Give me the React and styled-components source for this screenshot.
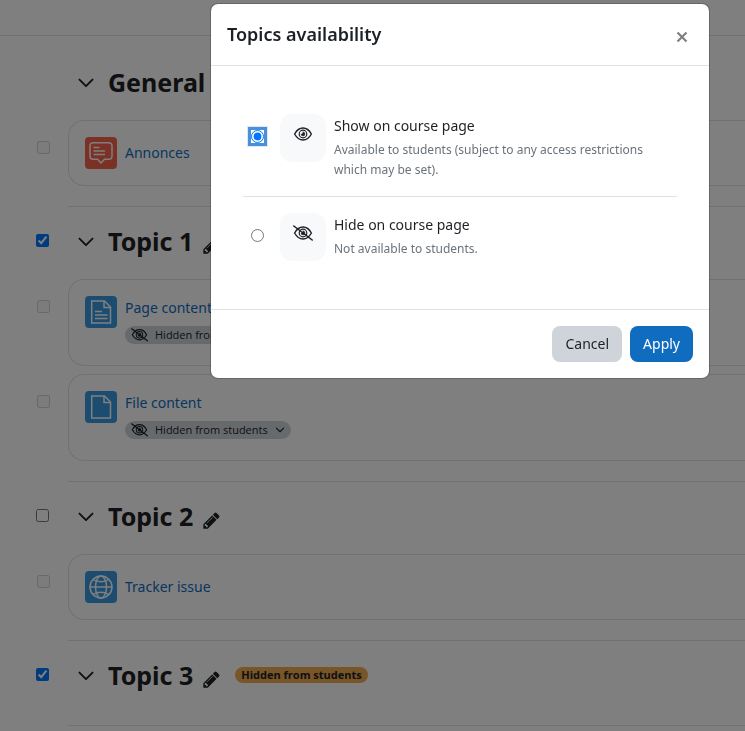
import React, { useState } from 'react';
import styled, { createGlobalStyle } from 'styled-components';

const GlobalStyle = createGlobalStyle`
  * {
    box-sizing: border-box;
  }

  body {
    margin: 0;
    background: #fff;
    color: #1d2125;
    font-family: "Noto Sans", "Open Sans", sans-serif;
    font-size: 14px;
    line-height: 24px;
  }

  button {
    font: inherit;
    color: inherit;
    cursor: pointer;
  }
`

const Page = styled.div`
  min-height: 100vh;
  overflow: hidden;
`

const Navbar = styled.header`
  height: 36px;
  border-bottom: 1px solid #dee2e6;
`

const Course = styled.main`
  padding-top: 12px;
`

const Section = styled.section`
  padding-bottom: 12px;
`

const SectionLine = styled.hr`
  height: 1px;
  margin: 0 0 0 68px;
  border: 0;
  background: #dee2e6;
`

const SectionHeader = styled.div`
  display: flex;
  align-items: center;
  height: 72px;
  padding-bottom: 2px;
`

const SelectCell = styled.div`
  flex: 0 0 68px;
  align-self: flex-start;
  padding: ${props => props.$activity ? "21px 0 0 37px" : "27px 0 0 36px"};
`

const Checkbox = styled.input`
  display: block;
  width: 13px;
  height: 13px;
  margin: 0;
`

const IconButton = styled.button`
  display: flex;
  align-items: center;
  justify-content: center;
  width: ${props => props.$width}px;
  height: 32px;
  padding: ${props => props.$low ? "6px 0 0" : "0"};
  border: 0;
  background: none;
`

const SectionTitle = styled.h3`
  margin: 0 8px 0 4px;
  padding-bottom: 2px;
  font-size: 25px;
  font-weight: 700;
  line-height: 32px;
`

const HiddenBadge = styled.span`
  margin: 0 0 2px 14px;
  padding: 0 6px;
  border-radius: 8px;
  background: #f0ad4e;
  font-family: "Open Sans", sans-serif;
  font-size: 11px;
  font-weight: 700;
  line-height: 16px;
`

const ActivityList = styled.ul`
  margin: 0;
  padding: 0;
  list-style: none;
`

const ActivityRow = styled.li`
  display: flex;
  margin-bottom: 8px;
`

const Card = styled.div`
  flex: 1;
  display: flex;
  align-items: ${props => props.$tall ? "flex-start" : "center"};
  gap: 8px;
  min-height: ${props => props.$tall ? 87 : 66}px;
  padding: 16px;
  border: 1px solid #dee2e6;
  border-right: 0;
  border-radius: 16px 0 0 16px;
`

const ActivityIcon = styled.span`
  display: flex;
  padding: 4px;
  border-radius: 4px;
  background: ${props => props.$color};
`

const ActivityBody = styled.div`
  display: flex;
  flex-direction: column;
  align-items: flex-start;
  gap: 6px;
`

const ActivityLink = styled.a`
  color: #0f6cbf;
  text-decoration: none;
`

const VisibilityButton = styled.button`
  display: flex;
  align-items: center;
  gap: 7px;
  height: 18px;
  padding: 0 6px;
  border: 0;
  border-radius: 9px;
  background: #ced4da;

  && {
    font-family: "Open Sans", sans-serif;
    font-size: 11px;
    line-height: 18px;
  }
`

const Backdrop = styled.div`
  position: fixed;
  inset: 0;
  display: flex;
  align-items: flex-start;
  justify-content: flex-end;
  padding: 3px 35px;
  background: rgba(0, 0, 0, 0.5);
`

const Dialog = styled.form`
  width: 100%;
  max-width: 500px;
  border: 1px solid rgba(0, 0, 0, 0.2);
  border-radius: 8px;
  background: #fff;
  background-clip: padding-box;
`

const DialogHeader = styled.div`
  display: flex;
  align-items: center;
  justify-content: space-between;
  height: 62px;
  padding: 0 16px 2px;
  border-bottom: 1px solid #dee2e6;
`

const DialogTitle = styled.h5`
  margin: 0;
  font-size: 18px;
  font-weight: 600;
  line-height: 24px;
`

const CloseButton = styled(IconButton)`
  color: #808080;
`

const DialogBody = styled.div`
  padding: 32px;
`

const Option = styled.div`
  display: flex;
  align-items: flex-start;
  padding: 16px 0;

  & + & {
    border-top: 1px solid #dee2e6;
  }
`

const Radio = styled.input`
  flex: none;
  width: 13px;
  height: 13px;
  margin: 16px 16px 0 8px;

  &:checked {
    border-radius: 0;
    outline: 3px solid #4a90d6;
    box-shadow: 0 0 0 4px #dbe9f7;
  }
`

const OptionIcon = styled.span`
  flex: none;
  display: flex;
  align-items: center;
  justify-content: center;
  width: 46px;
  height: 48px;
  margin-right: 8px;
  padding-bottom: 8px;
  border-radius: 12px;
  background: #f8f9fa;
`

const OptionLabel = styled.label`
  display: block;
`

const OptionHelp = styled.p`
  margin: 2px 0 0;
  color: #6a737b;
  font-size: 12px;
  line-height: 20px;
`

const DialogFooter = styled.div`
  display: flex;
  justify-content: flex-end;
  gap: 8px;
  padding: 16px;
  border-top: 1px solid #dee2e6;
`

const Button = styled.button`
  height: 36px;
  padding: 0 13px;
  border: 0;
  border-radius: 8px;
  background: ${props => props.$primary ? "#0f6cbf" : "#ced4da"};

  && {
    color: ${props => props.$primary ? "#fff" : "#1d2125"};
  }
`

function Chevron({ size }) {
  return (
    <svg width={size} height={size} viewBox="0 0 16 16" fill="none" stroke="currentColor"
      strokeWidth="1.7" strokeLinecap="round" strokeLinejoin="round" aria-hidden="true">
      <path d="M2.200 5l5.800 5.800 5.800-5.800" />
    </svg>
  )
}

function Pencil() {
  return (
    <svg width="19" height="19" viewBox="0 0 1792 1792" fill="currentColor" aria-hidden="true">
      <path d="M491 1536l91-91-235-235-91 91v107h128v128h107zm523-928q0-22-22-22-10 0-17 7l-542 542q-7 7-7 17 0 22 22 22 10 0 17-7l542-542q7-7 7-17zm-54-192l416 416-832 832h-416v-416zm683 96q0 53-37 90l-166 166-416-416 166-165q36-38 90-38 53 0 91 38l235 234q37 39 37 91z" />
    </svg>
  )
}

function Eye({ width = 20, slashed }) {
  return (
    <svg width={width} height={width * 0.8} viewBox="0 0 20 16" fill="none" stroke="currentColor"
      strokeWidth="1.4" strokeLinecap="round" aria-hidden="true">
      <path d="M1.600 8C3.800 4 6.700 2 10 2s6.200 2 8.400 6c-2.200 4-5.100 6-8.400 6S3.800 12 1.600 8z" />
      <circle cx="10" cy="8" r="3.800" strokeWidth="1.2" />
      <path d="M10 6a2 2 0 1 1-2 2c1.200.2 2.200-.8 2-2z" fill="currentColor" strokeWidth="0.4" />
      {slashed && <path d="M.8 1l18.400 14" strokeWidth="1.500" />}
    </svg>
  )
}

const activityGlyphs = {
  forum: (
    <>
      <path d="M4 1.700h16a3 3 0 0 1 3 3v10.600a3 3 0 0 1-3 3h-4.500l-3.500 3.700-3.500-3.700H4a3 3 0 0 1-3-3V4.700a3 3 0 0 1 3-3z" />
      <path d="M4.500 6.500h6M4.500 10h11.500M4.500 13.500h11.500" />
    </>
  ),
  page: (
    <>
      <path d="M2.700 1h12.800l6 6v16H2.700z" />
      <path d="M15 1v6.500h6.500" />
      <path d="M6 11.500h7M6 15h12.500M6 18.500h12.500" />
    </>
  ),
  file: (
    <>
      <path d="M2.700 1h12.800l6 6v16H2.700z" />
      <path d="M15 1v6.500h6.500" />
    </>
  ),
  url: (
    <>
      <circle cx="12" cy="12" r="11" />
      <ellipse cx="12" cy="12" rx="5.500" ry="11" />
      <path d="M1 12h22M4 4.500c4.500 3 11.500 3 16 0M4 19.500c4.500-3 11.500-3 16 0" />
    </>
  ),
}

function Activity({ name, type, color, hidden }) {
  return (
    <ActivityRow>
      <SelectCell $activity>
        <Checkbox type="checkbox" disabled aria-label={`Select activity ${name}`} />
      </SelectCell>
      <Card $tall={hidden}>
        <ActivityIcon $color={color}>
          <svg width="24" height="24" viewBox="0 0 24 24" fill="none" stroke="#fff" strokeWidth="1.500" aria-hidden="true">
            {activityGlyphs[type]}
          </svg>
        </ActivityIcon>
        <ActivityBody>
          <ActivityLink href="#">{name}</ActivityLink>
          {hidden && (
            <VisibilityButton type="button">
              <Eye width={17} slashed />
              Hidden from students
              <Chevron size={10} />
            </VisibilityButton>
          )}
        </ActivityBody>
      </Card>
    </ActivityRow>
  )
}

const BLUE = "#399be2";
const RED = "#f7634d";

const sections = [
  { name: "General", fixed: true, activities: [
    { name: "Annonces", type: "forum", color: RED },
  ] },
  { name: "Topic 1", selected: true, activities: [
    { name: "Page content", type: "page", color: BLUE, hidden: true },
    { name: "File content", type: "file", color: BLUE, hidden: true },
  ] },
  { name: "Topic 2", activities: [
    { name: "Tracker issue", type: "url", color: BLUE },
  ] },
  { name: "Topic 3", selected: true, hidden: true, activities: [] },
];

const options = [
  {
    value: "show",
    label: "Show on course page",
    help: "Available to students (subject to any access restrictions which may be set).",
  },
  {
    value: "hide",
    label: "Hide on course page",
    help: "Not available to students.",
  },
];

function CourseSection({ section }) {
  return (
    <Section>
      <SectionHeader>
        <SelectCell>
          {!section.fixed && (
            <Checkbox type="checkbox" defaultChecked={section.selected} aria-label={`Select section ${section.name}`} />
          )}
        </SelectCell>
        <IconButton type="button" $width={36} aria-label={`Collapse ${section.name}`}>
          <Chevron size={18} />
        </IconButton>
        <SectionTitle>{section.name}</SectionTitle>
        <IconButton type="button" $width={20} $low aria-label={`Edit ${section.name}`}>
          <Pencil />
        </IconButton>
        {section.hidden && <HiddenBadge>Hidden from students</HiddenBadge>}
      </SectionHeader>
      <ActivityList>
        {section.activities.map(activity => <Activity key={activity.name} {...activity} />)}
      </ActivityList>
    </Section>
  )
}

function AvailabilityDialog({ onClose }) {
  const [value, setValue] = useState("show");

  return (
    <Backdrop>
      <Dialog role="dialog" aria-labelledby="dialog-title" onSubmit={(e) => { e.preventDefault(); onClose() }}>
        <DialogHeader>
          <DialogTitle id="dialog-title">Topics availability</DialogTitle>
          <CloseButton type="button" $width={22} $low aria-label="Close" onClick={onClose}>
            <svg width="12" height="12" viewBox="0 0 12 12" stroke="currentColor" strokeWidth="2.200" aria-hidden="true">
              <path d="M1.500 1.500l9 9M10.500 1.500l-9 9" />
            </svg>
          </CloseButton>
        </DialogHeader>
        <DialogBody>
          {options.map(({ value: id, label, help }) => (
            <Option key={id}>
              <Radio
                type="radio"
                name="availability"
                id={`option-${id}`}
                aria-describedby={`help-${id}`}
                checked={value === id}
                onChange={() => setValue(id)} />
              <OptionIcon><Eye slashed={id === "hide"} /></OptionIcon>
              <div>
                <OptionLabel htmlFor={`option-${id}`}>{label}</OptionLabel>
                <OptionHelp id={`help-${id}`}>{help}</OptionHelp>
              </div>
            </Option>
          ))}
        </DialogBody>
        <DialogFooter>
          <Button type="button" onClick={onClose}>Cancel</Button>
          <Button type="submit" $primary>Apply</Button>
        </DialogFooter>
      </Dialog>
    </Backdrop>
  )
}

export default function App() {
  const [open, setOpen] = useState(true);

  return (
    <Page>
      <GlobalStyle />
      <Navbar />
      <Course>
        {sections.map(section => (
          <React.Fragment key={section.name}>
            <CourseSection section={section} />
            <SectionLine />
          </React.Fragment>
        ))}
      </Course>
      {open && <AvailabilityDialog onClose={() => setOpen(false)} />}
    </Page>
  )
}
